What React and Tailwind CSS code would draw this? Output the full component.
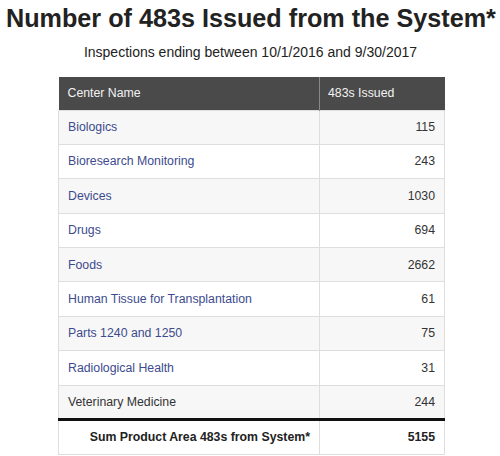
const rows = [
  { name: 'Biologics', count: 115, link: true },
  { name: 'Bioresearch Monitoring', count: 243, link: true },
  { name: 'Devices', count: 1030, link: true },
  { name: 'Drugs', count: 694, link: true },
  { name: 'Foods', count: 2662, link: true },
  { name: 'Human Tissue for Transplantation', count: 61, link: true },
  { name: 'Parts 1240 and 1250', count: 75, link: true },
  { name: 'Radiological Health', count: 31, link: true },
  { name: 'Veterinary Medicine', count: 244, link: false },
];

export default function App() {
  return (
    <div className="w-[500px] h-[456px] bg-white overflow-hidden font-['Liberation_Sans',Arial,sans-serif] text-[#333]">
      <h1 className="pl-[6px] pt-[3px] text-[25.2px] leading-[30px] font-bold text-[#222] whitespace-nowrap">
        Number of 483s Issued from the System*
      </h1>
      <p className="mt-[11px] text-center pl-[1px] text-[14px] leading-[16px] text-[#222]">
        Inspections ending between 10/1/2016 and 9/30/2017
      </p>
      <table className="ml-[58px] mt-[17px] w-[387px] border-collapse text-[12.3px] table-fixed">
        <colgroup>
          <col className="w-[261px]" />
          <col />
        </colgroup>
        <thead>
          <tr className="bg-[#4a4a4a] text-[#f2f2f2] h-[33px]">
            <th className="text-left font-normal pl-[9px] border-r border-[#888]">Center Name</th>
            <th className="text-left font-normal pl-[8px]">483s Issued</th>
          </tr>
        </thead>
        <tbody>
          {rows.map((r, i) => (
            <tr key={r.name} className={`h-[34.4px] ${i % 2 === 0 ? 'bg-[#f7f7f7]' : 'bg-white'}`}>
              <td className={`pl-[9px] border border-[#dedede] ${r.link ? 'text-[#3d4b8e]' : 'text-[#333]'}`}>
                {r.name}
              </td>
              <td className="pr-[9px] text-right border border-[#dedede]">{r.count}</td>
            </tr>
          ))}
          <tr className="h-[35px] bg-white font-bold text-[#222]">
            <td className="pr-[9px] text-right border border-[#dedede] border-t-[3px] border-t-[#111]">
              Sum Product Area 483s from System*
            </td>
            <td className="pr-[9px] text-right border border-[#dedede] border-t-[3px] border-t-[#111]">5155</td>
          </tr>
        </tbody>
      </table>
    </div>
  );
}
